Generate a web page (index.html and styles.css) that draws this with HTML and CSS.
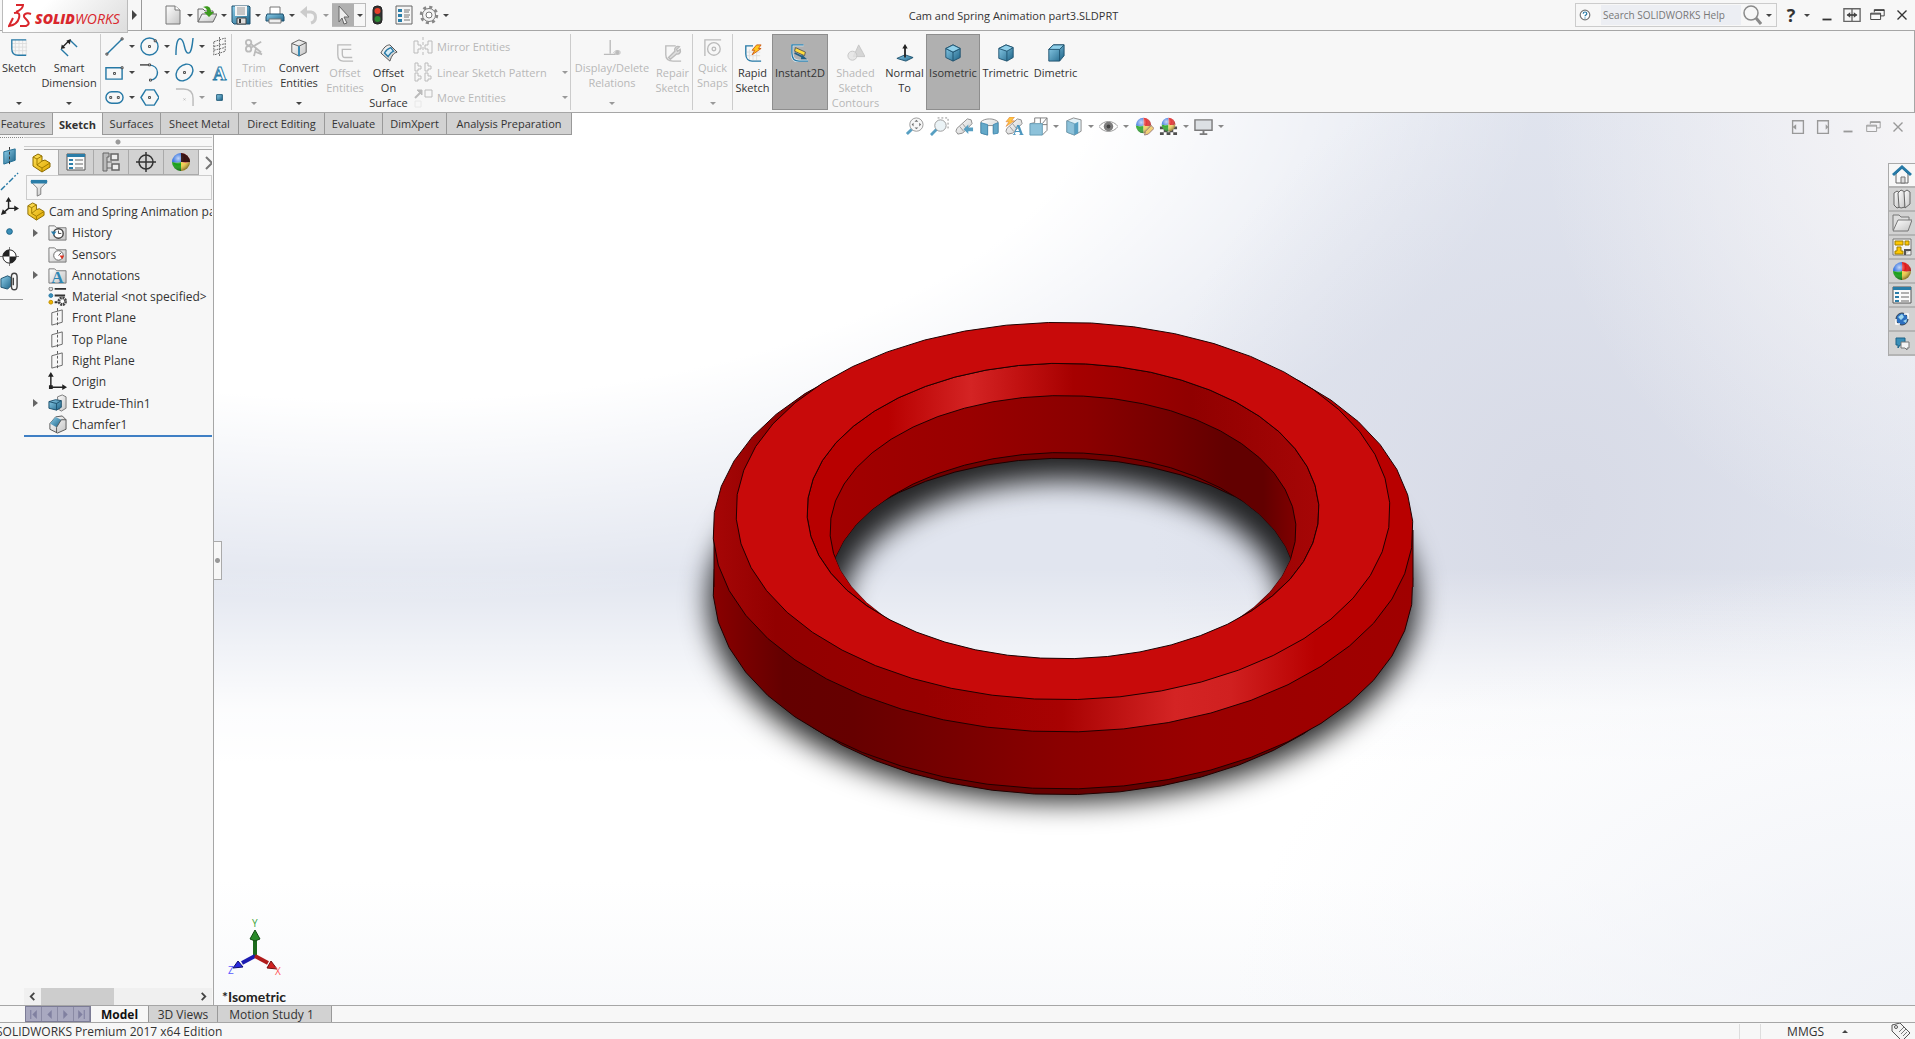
FILE: index.html
```html
<!doctype html>
<html lang="en">
<head>
<meta charset="UTF-8">
<title>Cam and Spring Animation part3.SLDPRT</title>
<link rel="stylesheet" href="styles.css">
</head>
<body>
<!-- shared gradients and symbols -->
<svg class="defs" aria-hidden="true">
	<defs>
		<linearGradient id="gBlue" x1="0" y1="0" x2="1" y2="1"><stop offset="0" stop-color="#8fd0ec"/><stop offset="1" stop-color="#1d6387"/></linearGradient>
		<linearGradient id="gGray" x1="0" y1="0" x2="1" y2="1"><stop offset="0" stop-color="#fff"/><stop offset="1" stop-color="#c4c4c4"/></linearGradient>
		<linearGradient id="gYellow" x1="0" y1="0" x2="1" y2="1"><stop offset="0" stop-color="#ffe25a"/><stop offset="1" stop-color="#e0a800"/></linearGradient>
		<radialGradient id="gShine" cx=".35" cy=".3" r=".7"><stop offset="0" stop-color="#fff" stop-opacity=".7"/><stop offset=".5" stop-color="#fff" stop-opacity="0"/><stop offset="1" stop-color="#000" stop-opacity=".4"/></radialGradient>
	</defs>
	<symbol id="ball" viewBox="0 0 20 20">
		<path d="M10 10V1a9 9 0 0 0-9 9c3 1 6 1 9 0z" fill="#2f6fe0"/><path d="M10 10V1a9 9 0 0 1 9 9c-3 1-6 1-9 0z" fill="#e01818"/>
		<path d="M10 10c-3 1-6 1-9 0a9 9 0 0 0 9 9z" fill="#17a017"/><path d="M10 10c3 1 6 1 9 0a9 9 0 0 1-9 9z" fill="#f4d04a"/>
		<circle cx="10" cy="10" r="9" fill="url(#gShine)"/>
	</symbol>
	<symbol id="part" viewBox="0 0 20 20">
		<path d="M2 4l5-3 4 2v5l3-1 5 3v4l-8 5-9-6z" fill="url(#gYellow)" stroke="#8a6a00"/><path d="M2 4l4 2 5-3M6 6v6l5 3 8-5M11 15v4M6 12l5-4" fill="none" stroke="#a07c00"/>
	</symbol>
	<symbol id="plane" viewBox="0 0 20 20">
		<path d="M4 5l11-3v13L4 18z" fill="none" stroke="#666"/><path d="M10 0v20" stroke="#555" stroke-dasharray="3 2"/>
	</symbol>
	<symbol id="folder" viewBox="0 0 20 20"><path d="M1 3h6l2 2h10v13H1z" fill="url(#gGray)" stroke="#777"/></symbol>
	<symbol id="props" viewBox="0 0 20 20">
		<path d="M1 2h18v16H1z" fill="#fafafa" stroke="#555"/><path d="M1 2h18v3H1z" fill="#2a7da8"/>
		<path d="M3 7h4v2H3zM3 11h4v2H3zM3 15h4v2H3z" fill="#2a7da8"/><path d="M9 8h8M9 12h8M9 16h8" stroke="#666"/>
	</symbol>
	<symbol id="restore" viewBox="0 0 20 20"><path d="M7 7V4h11v7h-4M3 8h11v7H3zM3 9h11M7 5h11" fill="none" stroke="currentColor"/></symbol>
	<symbol id="close" viewBox="0 0 20 20"><path d="M5 5l10 10M15 5L5 15" stroke="currentColor" stroke-width="1.5"/></symbol>
	<symbol id="minimize" viewBox="0 0 20 20"><path d="M5 15h10" stroke="currentColor" stroke-width="2"/></symbol>
	<symbol id="tube" viewBox="0 0 20 20"><path d="M2 12L13 2l4 1 1 4L8 17l-5 1-2-3z" fill="url(#gGray)" stroke="#777"/><path d="M8 7l4 5M5 10l4 5" stroke="#888"/></symbol>
</svg>

<header class="titlebar">
	<a class="logo" href="#" aria-label="SOLIDWORKS">
		<svg viewBox="0 0 24 24" fill="none" stroke="#d9262c" stroke-width="2"><path d="M8 1l7 0c0 3-2 5-7 7M6 9c5-1 6 1 5 5-1 4-4 7-10 8l4-8M23 10c-5-2-9 1-6 4 3 3 6 6 1 8h-6"/></svg>
		<span><b>SOLID</b>WORKS</span>
	</a>
	<button class="expand" aria-label="Show menu"><svg viewBox="0 0 6 10"><path d="M0 0l5 5-5 5z" fill="#444"/></svg></button>
	<nav class="quick">
		<button class="tool" aria-label="New"><svg viewBox="0 0 20 20"><path d="M3 1h9l5 4v14H3z" fill="url(#gGray)" stroke="#777"/><path d="M12 1v4h5" fill="#fff" stroke="#777"/></svg><i class="caret"></i></button>
		<button class="tool" aria-label="Open"><svg viewBox="0 0 20 20"><path d="M1 17V4h5l2 2h8v3" fill="#eee" stroke="#666"/><path d="M1 17L5 9h15l-4 8z" fill="url(#gGray)" stroke="#666"/><path d="M6 2c5-2 8 0 8 5h3l-5 5-5-5h3c0-3-1-4-4-5z" fill="#3c9a1c"/></svg><i class="caret"></i></button>
		<button class="tool" aria-label="Save"><svg viewBox="0 0 20 20"><path d="M1 1h17l1 1v17H3l-2-2z" fill="url(#gBlue)" stroke="#1c4f6c"/><path d="M4 1h12v10H4z" fill="#f4f4f4"/><path d="M6 3h8M6 5h8M6 7h8M6 9h8" stroke="#999"/><path d="M6 13h9v6H6z" fill="#ddd" stroke="#444"/><path d="M8 14h2v4H8z" fill="#333"/></svg><i class="caret"></i></button>
		<button class="tool" aria-label="Print"><svg viewBox="0 0 20 20"><path d="M5 2h10v8H5z" fill="#fff" stroke="#777"/><path d="M2 9h16l1 3v4H1v-4z" fill="url(#gBlue)" stroke="#1c4f6c"/><path d="M4 14h12v4H4z" fill="#eee" stroke="#777"/></svg><i class="caret"></i></button>
		<button class="tool off" aria-label="Undo"><svg viewBox="0 0 20 20"><path d="M4 7h8c6 1 6 9 0 11" fill="none" stroke="#ccc" stroke-width="3"/><path d="M8 1v12L1 7z" fill="#ccc"/></svg><i class="caret"></i></button>
		<button class="tool picked" aria-label="Select"><span><svg viewBox="0 0 20 20"><path d="M6 1l10 11-5 0 3 6-3 1-2-6-3 4z" fill="#eee" stroke="#666"/></svg></span><i class="caret"></i></button>
		<button class="tool short" aria-label="Rebuild"><svg viewBox="0 0 20 20"><rect x="4" y="1" width="9" height="18" rx="4" fill="#333" stroke="#222"/><circle cx="8.500" cy="6" r="3" fill="#e8402a"/><circle cx="8.500" cy="14" r="3" fill="#2c8a33"/></svg></button>
		<button class="tool short" aria-label="File properties"><svg viewBox="0 0 20 20"><path d="M1 1h16v18H1z" fill="#f5f5f5" stroke="#666"/><path d="M3 4h4v3H3zM3 9h4v3H3zM3 14h4v3H3z" fill="#2a7da8"/><path d="M9 5h6M9 7h5M9 10h6M9 12h5M9 15h6" stroke="#777"/></svg></button>
		<button class="tool" aria-label="Options"><svg viewBox="0 0 20 20"><circle cx="10" cy="10" r="8" fill="none" stroke="#888" stroke-width="2.500" stroke-dasharray="3.140 3.140"/><circle cx="10" cy="10" r="6.500" fill="#f4f4f4" stroke="#777"/><circle cx="10" cy="10" r="3" fill="#fff" stroke="#777"/></svg><i class="caret"></i></button>
	</nav>
	<h1 class="doc-title">Cam and Spring Animation part3.SLDPRT</h1>
	<form class="search">
		<svg viewBox="0 0 20 20"><circle cx="10" cy="10" r="8" fill="#fff" stroke="#777" stroke-width="2"/><path d="M7 8c0-4 6-4 6 0 0 2-3 2-3 4M10 14v2" fill="none" stroke="#2679a6" stroke-width="2"/></svg>
		<input type="text" aria-label="Search SOLIDWORKS Help" placeholder="Search SOLIDWORKS Help">
		<button class="tool" type="button" aria-label="Search"><svg viewBox="0 0 20 20" fill="none" stroke="#8a8a8a"><circle cx="9" cy="8" r="7" stroke-width="1.500"/><path d="M14 13l5 6" stroke-width="3"/></svg><i class="caret"></i></button>
	</form>
	<nav class="window-buttons">
		<button class="help" aria-label="Help">?<i class="caret"></i></button>
		<button aria-label="Minimize"><svg viewBox="0 0 20 20"><use href="#minimize"/></svg></button>
		<button aria-label="Span displays"><svg viewBox="0 0 20 20"><path d="M1 3h18v14H1zM10 3v14" fill="none" stroke="#666" stroke-width="1.500"/><path d="M5 10h10" stroke="#444" stroke-width="2"/><path d="M8 7v6l-4-3zM12 7v6l4-3z" fill="#444"/></svg></button>
		<button aria-label="Restore"><svg viewBox="0 0 20 20"><use href="#restore"/></svg></button>
		<button aria-label="Close"><svg viewBox="0 0 20 20"><use href="#close"/></svg></button>
	</nav>
</header>

<section class="ribbon">
	<button class="cmd drop"><svg viewBox="0 0 20 20" fill="none"><path d="M6 1v17M10 1v17M14 1v17M18 1v17M2 5h17M2 9h17M2 13h17" stroke="#ddd"/><path d="M18 1H2v10c0 5 3 7 7 7h9" stroke="#2679a6" stroke-width="1.500"/></svg><span>Sketch</span><i class="caret"></i></button>
	<button class="cmd drop"><svg viewBox="0 0 20 20" fill="none"><path d="M1 11l8 8M11 1l8 8" stroke="#2679a6" stroke-width="1.500"/><path d="M3 9l7-7" stroke="#222" stroke-width="1.500"/><path d="M1 11l1-5 4 4zM12 0l-5 2 4 4z" fill="#222"/></svg><span>Smart Dimension</span><i class="caret"></i></button>
	<div class="sketch-tools">
		<button class="mini" aria-label="Line"><svg viewBox="0 0 20 20" fill="none" stroke="#2679a6"><path d="M2 18L18 2" stroke-width="1.500"/><path d="M1 17h2v2H1zM17 1h2v2h-2z" fill="#fff" stroke="#444"/></svg><i class="caret"></i></button>
		<button class="mini" aria-label="Circle"><svg viewBox="0 0 20 20" fill="none" stroke="#2679a6"><circle cx="10" cy="10" r="9" stroke-width="1.500"/><path d="M9 9h2v2H9zM15 3h2v2h-2z" fill="#fff" stroke="#444"/></svg><i class="caret"></i></button>
		<button class="mini" aria-label="Spline"><svg viewBox="0 0 20 20" fill="none" stroke="#2679a6" stroke-width="1.500"><path d="M1 19C1 6 3 1 6 2c5 2 3 15 8 15 3 0 4-6 5-16"/></svg><i class="caret"></i></button>
		<button class="mini" aria-label="Sketch plane"><svg viewBox="0 0 20 20" fill="none" stroke="#666" stroke-dasharray="2 1"><path d="M4 5l12-4v14L4 19zM10 0v20M4 10l12-3M4 14l12-3"/></svg></button>
		<button class="mini" aria-label="Rectangle"><svg viewBox="0 0 20 20" fill="none" stroke="#2679a6"><path d="M1 5h17v12H1z" stroke-width="1.500"/><path d="M9 10h2v2H9zM17 4h2v2h-2z" fill="#fff" stroke="#444"/></svg><i class="caret"></i></button>
		<button class="mini" aria-label="Arc"><svg viewBox="0 0 20 20" fill="none" stroke="#2679a6"><path d="M0 2h10" stroke="#444" stroke-width="1.500"/><path d="M10 2c11 1 11 15 1 16" stroke-width="1.500"/><path d="M9 1h2v2H9zM10 17h2v2h-2z" fill="#fff" stroke="#444"/></svg><i class="caret"></i></button>
		<button class="mini" aria-label="Ellipse"><svg viewBox="0 0 20 20" fill="none" stroke="#2679a6"><ellipse cx="10" cy="10" rx="10" ry="7.500" transform="rotate(-45 10 10)" stroke-width="1.500"/><path d="M9 9h2v2H9z" stroke="#444"/></svg><i class="caret"></i></button>
		<button class="mini" aria-label="Text"><svg viewBox="0 0 20 20"><text x="10" y="18" text-anchor="middle" class="glyph-a">A</text></svg></button>
		<button class="mini" aria-label="Slot"><svg viewBox="0 0 20 20" fill="none" stroke="#2679a6"><rect x="1" y="4" width="18" height="12" rx="6" stroke-width="1.500"/><path d="M5 9h2v2H5zM13 9h2v2h-2z" stroke="#444"/></svg><i class="caret"></i></button>
		<button class="mini" aria-label="Polygon"><svg viewBox="0 0 20 20" fill="none" stroke="#2679a6"><path d="M1 10l5-8h9l5 8-5 8H6z" stroke-width="1.500"/><path d="M9 9h2v2H9z" stroke="#444"/></svg></button>
		<button class="mini off" aria-label="Fillet"><svg viewBox="0 0 20 20" fill="none" stroke="#bbb"><path d="M1 1h8c7 0 10 4 10 10v8" stroke-width="1.500"/><path d="M9 11l2 2M11 11l-2 2"/></svg><i class="caret"></i></button>
		<button class="mini" aria-label="Point"><svg viewBox="0 0 20 20"><path d="M7 7h6v6H7z" fill="url(#gBlue)" stroke="#1d5878"/></svg></button>
	</div>
	<button class="cmd drop off"><svg viewBox="0 0 20 20" fill="none" stroke="#bbb" stroke-width="2"><circle cx="4" cy="4" r="3"/><circle cx="4" cy="11" r="3"/><path d="M6 5l12 10M6 10L18 3M12 11l-2 8M11 14l8 3"/></svg><span>Trim Entities</span><i class="caret"></i></button>
	<button class="cmd drop"><svg viewBox="0 0 20 20"><path d="M2 5l8-4 8 3v11l-8 4-8-4z" fill="url(#gGray)" stroke="#555"/><path d="M2 5l8 3 8-4M10 8v11" fill="none" stroke="#555"/><path d="M10 8v11" stroke="#2f8ab8" stroke-width="2"/></svg><span>Convert Entities</span><i class="caret"></i></button>
	<button class="cmd off"><svg viewBox="0 0 20 20" fill="none" stroke="#bbb" stroke-width="1.500"><path d="M17 1H2v11c0 4 2 7 6 7h11M17 6H7v5c0 2 1 4 3 4h8"/></svg><span>Offset Entities</span></button>
	<button class="cmd"><svg viewBox="0 0 20 20"><path d="M1 10C4 4 7 1 11 1l8 8c-4 1-6 4-8 10z" fill="url(#gGray)" stroke="#444"/><path d="M5 10c2-4 4-5 7-6l3 4c-3 1-4 3-6 6z" fill="#d6ecf7" stroke="#2679a6" stroke-width="1.500"/></svg><span>Offset On Surface</span></button>
	<div class="stack">
		<button class="row off"><svg viewBox="0 0 20 20" fill="none" stroke="#bbb"><path d="M1 4h4v4h3v4H5v4H1zM19 4h-4v4h-3v4h3v4h4z"/><path d="M10 0v20" stroke-dasharray="3 2"/></svg><span>Mirror Entities</span></button>
		<button class="row off"><svg viewBox="0 0 20 20" fill="none" stroke="#bbb"><path d="M2 1h3v3h3v3H5v2H2zM12 1h3v3h3v3h-3v2h-3zM2 11h3v3h3v3H5v2H2zM12 11h3v3h3v3h-3v2h-3z"/></svg><span>Linear Sketch Pattern</span><i class="caret"></i></button>
		<button class="row off"><svg viewBox="0 0 20 20" fill="none" stroke="#bbb"><path d="M12 2h7v7h-7z"/><path d="M2 10l5-5" stroke-width="2"/><path d="M4 2h5v5z" fill="#bbb"/><path d="M2 13h6v6H2z" stroke="#e8e8e8"/></svg><span>Move Entities</span><i class="caret"></i></button>
	</div>
	<button class="cmd drop off"><svg viewBox="0 0 20 20" fill="none" stroke="#bbb"><path d="M8 1v15M1 17h13" stroke-width="1.500"/><path d="M12 15c2-3 6-3 8 0-2 3-6 3-8 0z"/><circle cx="16" cy="15" r="2" fill="#bbb"/></svg><span>Display/Delete Relations</span><i class="caret"></i></button>
	<button class="cmd off"><svg viewBox="0 0 20 20" fill="none" stroke="#bbb" stroke-width="1.500"><path d="M13 2H2v10c0 5 3 7 8 7h9"/><path d="M5 15l7-7c-1-4 2-6 5-5l-3 3 1 2 3-2c1 3-1 6-4 5l-7 6z" fill="#ddd"/></svg><span>Repair Sketch</span></button>
	<button class="cmd drop off rule"><svg viewBox="0 0 20 20" fill="none" stroke="#bbb" stroke-width="1.500"><path d="M1 19V1h18"/><circle cx="11" cy="11" r="7"/><circle cx="11" cy="11" r="2"/></svg><span>Quick Snaps</span><i class="caret"></i></button>
	<button class="cmd rule"><svg viewBox="0 0 20 20" fill="none"><path d="M6 6v12M10 4v14M14 4v14M3 9h15M3 13h15" stroke="#ddd"/><path d="M10 2H2v9c0 5 3 8 7 8h10" stroke="#2679a6" stroke-width="1.500"/><path d="M14 1h5l-3 4h3L9 12l3-5H9z" fill="#ffc81e" stroke="#d05a10"/></svg><span>Rapid Sketch</span></button>
	<button class="cmd active"><svg viewBox="0 0 20 20" fill="none"><path d="M14 1H1v9c0 6 3 9 8 9h10" stroke="#e8f2f7" stroke-width="3"/><path d="M14 1H1v9c0 6 3 9 8 9h10" stroke="#2679a6" stroke-width="1.500"/><path d="M5 4l11 5-1 4-11-5z" fill="#ffdc3c" stroke="#555"/><path d="M4 10l10 5" stroke="#1f5f85" stroke-width="2"/><path d="M12 12l6 5h-7z" fill="#1f5f85"/></svg><span>Instant2D</span></button>
	<button class="cmd off"><svg viewBox="0 0 20 20"><path d="M13 1l7 13H7z" fill="#d5d5d5" stroke="#c4c4c4"/><circle cx="6" cy="13" r="5" fill="#e2e2e2" fill-opacity=".8" stroke="#c4c4c4"/></svg><span>Shaded Sketch Contours</span></button>
	<button class="cmd"><svg viewBox="0 0 20 20"><path d="M1 16l9-4 9 3-8 4z" fill="url(#gBlue)" stroke="#1c4f6c"/><path d="M10 15V4" stroke="#222" stroke-width="2"/><path d="M7 5l3-5 3 5z" fill="#222"/></svg><span>Normal To</span></button>
	<button class="cmd active"><svg viewBox="0 0 20 20" stroke="#1c4f6c"><path d="M10 1l8 4v10l-8 4-8-4V5z" fill="url(#gBlue)"/><path d="M2 5l8 4 8-4M10 9v10" fill="none"/><path d="M10 1l8 4-8 4-8-4z" fill="#90d0ea"/></svg><span>Isometric</span></button>
	<button class="cmd"><svg viewBox="0 0 20 20" stroke="#1c4f6c"><path d="M10 1l8 3v11l-7 4-9-3V5z" fill="url(#gBlue)"/><path d="M10 1l8 3-7 4-9-3z" fill="#90d0ea"/><path d="M11 8v11" fill="none"/></svg><span>Trimetric</span></button>
	<button class="cmd"><svg viewBox="0 0 20 20" stroke="#1c4f6c"><path d="M7 1h12v12l-5 6H2V6z" fill="url(#gBlue)"/><path d="M7 1h12l-5 5H2z" fill="#90d0ea"/><path d="M14 6v13" fill="none"/></svg><span>Dimetric</span></button>
</section>

<main class="workspace">
	<nav class="tabs">
		<button>Features</button><button class="current">Sketch</button><button>Surfaces</button><button>Sheet Metal</button><button>Direct Editing</button><button>Evaluate</button><button>DimXpert</button><button>Analysis Preparation</button>
	</nav>

	<aside class="side">
		<nav class="strip">
			<button aria-label="Plane"><svg viewBox="0 0 20 20"><path d="M4 5l12-3v12L4 18z" fill="url(#gBlue)" stroke="#1c6a90"/><path d="M10 0v20" stroke="#333" stroke-dasharray="3 2"/></svg></button>
			<button aria-label="Axis"><svg viewBox="0 0 20 20"><path d="M1 19L19 1" stroke="#2679a6" stroke-width="1.500" stroke-dasharray="6 2 2 2"/></svg></button>
			<button aria-label="Coordinate system"><svg viewBox="0 0 20 20" stroke="#222" stroke-width="1.500"><path d="M9 12V4M9 12h8M9 12l-6 5"/><path d="M6 5l3-5 3 5zM15 9l5 3-5 3zM3 13l-2 6 6-2z" fill="#222" stroke="none"/></svg></button>
			<button aria-label="Point"><svg viewBox="0 0 20 20"><circle cx="10" cy="10" r="3" fill="#3a8fb8" stroke="#1d6387"/></svg></button>
			<button aria-label="Center of mass"><svg viewBox="0 0 20 20"><path d="M0 10h20M10 0v20" stroke="#777"/><circle cx="10" cy="10" r="7" fill="#fff" stroke="#222"/><path d="M10 10V3a7 7 0 0 0-7 7zM10 10v7a7 7 0 0 0 7-7z" fill="#222"/></svg></button>
			<button aria-label="Mate reference"><svg viewBox="0 0 20 20"><path d="M1 7l7-3 4 2v8l-4 4-7-2z" fill="url(#gBlue)" stroke="#1c4f6c"/><path d="M12 16V5c0-5 6-5 6 0v10c0 5-6 5-6 0M14 6v8" fill="none" stroke="#444" stroke-width="1.500"/></svg></button>
		</nav>
		<section class="manager">
			<div class="grip"></div>
			<nav class="manager-tabs">
				<button class="current" aria-label="FeatureManager"><svg viewBox="0 0 20 20"><use href="#part"/></svg></button>
				<button aria-label="PropertyManager"><svg viewBox="0 0 20 20"><use href="#props"/></svg></button>
				<button aria-label="ConfigurationManager"><svg viewBox="0 0 20 20" fill="#eee" stroke="#666"><path d="M2 1h6v4H6v14H2zM6 10h5M6 16h7" fill="#bbb"/><path d="M10 2h7v6h-7zM11 12h7v6h-7z" stroke-width="1.500"/></svg></button>
				<button aria-label="DimXpertManager"><svg viewBox="0 0 20 20" fill="none" stroke="#333" stroke-width="1.500"><circle cx="10" cy="10" r="7"/><path d="M0 10h20M10 0v20"/></svg></button>
				<button aria-label="DisplayManager"><svg viewBox="0 0 20 20"><use href="#ball"/><path d="M10 10V1a9 9 0 0 1 9 9z" fill="#111" opacity=".8"/></svg></button>
				<button class="more" aria-label="More tabs"><svg viewBox="0 0 20 20"><path d="M7 4l6 6-6 6" fill="none" stroke="#777" stroke-width="2"/></svg></button>
			</nav>
			<label class="filter"><svg viewBox="0 0 20 20"><path d="M1 3h18l-7 7v7l-4 2v-9z" fill="url(#gGray)" stroke="#777"/><path d="M1 1h18v4H1z" fill="#2a7da8"/></svg><input type="text" aria-label="Filter"></label>
			<ul class="tree">
				<li class="root"><svg viewBox="0 0 20 20"><use href="#part"/></svg><span>Cam and Spring Animation part3</span></li>
				<li class="parent"><svg viewBox="0 0 20 20"><use href="#folder"/><circle cx="11" cy="11" r="5" fill="#fff" stroke="#444" stroke-width="1.500"/><path d="M11 8v3h3" fill="none" stroke="#444"/><path d="M3 9l3 4 3-4z" fill="#2679a6"/></svg><span>History</span></li>
				<li><svg viewBox="0 0 20 20"><use href="#folder"/><circle cx="11" cy="11" r="5" fill="#fff" stroke="#666"/><path d="M11 11l3-3" stroke="#444"/><path d="M12 11h5l-2 4z" fill="#e03020"/></svg><span>Sensors</span></li>
				<li class="parent"><svg viewBox="0 0 20 20"><use href="#folder"/><text x="10" y="18" text-anchor="middle" class="glyph-a solid">A</text></svg><span>Annotations</span></li>
				<li><svg viewBox="0 0 20 20"><circle cx="3" cy="2" r="2" fill="#ddd" stroke="#777"/><circle cx="3" cy="9" r="2" fill="#3a8fb8" stroke="#2679a6"/><circle cx="3" cy="16" r="2" fill="#f0b400" stroke="#c09000"/><path d="M7 2h12M7 9h11M7 16h3" stroke="#333" stroke-width="2"/><circle cx="15" cy="15" r="3.500" fill="#fff" stroke="#444" stroke-width="3" stroke-dasharray="2 .7"/></svg><span>Material &lt;not specified&gt;</span></li>
				<li><svg viewBox="0 0 20 20"><use href="#plane"/></svg><span>Front Plane</span></li>
				<li><svg viewBox="0 0 20 20"><use href="#plane"/></svg><span>Top Plane</span></li>
				<li><svg viewBox="0 0 20 20"><use href="#plane"/></svg><span>Right Plane</span></li>
				<li><svg viewBox="0 0 20 20"><path d="M3 2v14h14" fill="none" stroke="#222" stroke-width="1.500"/><path d="M0 5l3-5 3 5zM15 13l5 3-5 3zM1 14h4v4H1z" fill="#222"/></svg><span>Origin</span></li>
				<li class="parent"><svg viewBox="0 0 20 20"><path d="M10 3l5-2 4 2v12l-5 3-3-2z" fill="url(#gGray)" stroke="#777"/><path d="M1 8l7-2 6 1v7l-5 3-8-2z" fill="url(#gBlue)" stroke="#1c4f6c"/><path d="M1 8l8 2 5-3M9 10v7" fill="none" stroke="#1c4f6c"/></svg><span>Extrude-Thin1</span></li>
				<li><svg viewBox="0 0 20 20"><path d="M2 9l6-7 7-1 4 4v10l-9 4-8-4z" fill="url(#gGray)" stroke="#555"/><path d="M2 9l6-7 6 3-5 8z" fill="url(#gBlue)"/><path d="M9 13v6M9 13l5-8 5 0" fill="none" stroke="#555"/></svg><span>Chamfer1</span></li>
			</ul>
			<div class="hscroll">
				<button aria-label="Scroll left"><svg viewBox="0 0 10 10"><path d="M7 1L3 5l4 4" fill="none" stroke="#444" stroke-width="2"/></svg></button>
				<div class="thumb"></div>
				<button aria-label="Scroll right"><svg viewBox="0 0 10 10"><path d="M3 1l4 4-4 4" fill="none" stroke="#444" stroke-width="2"/></svg></button>
			</div>
		</section>
	</aside>

	<section class="viewport">
		<!-- rings: data-cy is the centre height, data-r the horizontal radius -->
		<svg class="model" viewBox="214 113 1701 892" role="img" aria-label="Chamfered ring">
			<defs>
				<linearGradient id="outerCham" gradientUnits="userSpaceOnUse" x1="713" y1="0" x2="1413" y2="0"><stop offset="0" stop-color="#a60606"/><stop offset=".09" stop-color="#920000"/><stop offset=".3" stop-color="#970000"/><stop offset=".5" stop-color="#a80202"/><stop offset=".66" stop-color="#d42424"/><stop offset=".74" stop-color="#d02020"/><stop offset=".86" stop-color="#b80000"/><stop offset="1" stop-color="#b80000"/></linearGradient>
				<linearGradient id="outerWall" gradientUnits="userSpaceOnUse" x1="713" y1="0" x2="1413" y2="0"><stop offset="0" stop-color="#8a0000"/><stop offset=".1" stop-color="#640000"/><stop offset=".2" stop-color="#660000"/><stop offset=".5" stop-color="#8b0000"/><stop offset=".7" stop-color="#9a0000"/><stop offset="1" stop-color="#a00000"/></linearGradient>
				<linearGradient id="innerCham" gradientUnits="userSpaceOnUse" x1="807" y1="0" x2="1319" y2="0"><stop offset="0" stop-color="#b80000"/><stop offset=".16" stop-color="#b80000"/><stop offset=".32" stop-color="#d42424"/><stop offset=".42" stop-color="#c01010"/><stop offset=".52" stop-color="#a60000"/><stop offset=".75" stop-color="#900000"/><stop offset="1" stop-color="#a60606"/></linearGradient>
				<linearGradient id="innerWall" gradientUnits="userSpaceOnUse" x1="830" y1="0" x2="1296" y2="0"><stop offset="0" stop-color="#a20000"/><stop offset=".3" stop-color="#990000"/><stop offset=".55" stop-color="#8a0000"/><stop offset=".72" stop-color="#760000"/><stop offset=".85" stop-color="#620000"/><stop offset=".93" stop-color="#620000"/><stop offset="1" stop-color="#800000"/></linearGradient>
				<filter id="soft" filterUnits="userSpaceOnUse" x="600" y="350" width="930" height="520"><feGaussianBlur stdDeviation="14"/></filter>
				<clipPath id="c1"><polygon data-cy="511" data-r="256"/></clipPath>
				<clipPath id="c2"><polygon data-cy="530" data-r="233"/></clipPath>
				<clipPath id="c3"><polygon data-cy="587" data-r="233"/></clipPath>
				<mask id="body" maskUnits="userSpaceOnUse" x="600" y="300" width="930" height="560">
					<path d="M600 300h930v560H600z" fill="#fff"/>
					<g clip-path="url(#c1)"><g clip-path="url(#c2)"><g clip-path="url(#c3)"><polygon data-cy="606" data-r="256" fill="#000"/></g></g></g>
				</mask>
			</defs>
			<path d="M709 601a354 201 0 0 1 708 0 354 201 0 0 1-708 0zM843 606a220 126 0 0 0 440 0 220 126 0 0 0-440 0z" fill="#000" fill-opacity=".85" fill-rule="evenodd" filter="url(#soft)"/>
			<g mask="url(#body)" stroke="#200000" stroke-width="1">
				<polygon data-cy="606" data-r="327" fill="#660000"/>
				<polygon data-cy="587" data-r="350" fill="url(#outerWall)"/>
				<path d="M714 530v57h699v-57z" fill="url(#outerWall)" stroke="none"/>
				<path d="M714 530v57M1413 530v57"/>
				<polygon data-cy="530" data-r="350" fill="url(#outerCham)"/>
				<polygon data-cy="511" data-r="327" fill="#c80a0a"/>
				<g clip-path="url(#c1)">
					<polygon data-cy="511" data-r="256" fill="url(#innerCham)"/>
					<polygon data-cy="530" data-r="233" fill="url(#innerWall)"/>
					<g clip-path="url(#c2)"><polygon data-cy="587" data-r="233" fill="#700000"/></g>
				</g>
			</g>
			<g fill="none" stroke="#200000">
				<polygon data-cy="511" data-r="256"/>
				<g clip-path="url(#c1)"><g clip-path="url(#c2)"><g clip-path="url(#c3)"><polygon data-cy="606" data-r="256"/></g></g></g>
			</g>
		</svg>

		<div class="viewbar">
			<nav class="headsup">
				<button class="tool" aria-label="Zoom to fit"><svg viewBox="0 0 20 20"><path d="M2 18l6-6" stroke="#3a8fb8" stroke-width="3"/><circle cx="12" cy="8" r="7" fill="#f6f6f6" stroke="#888"/><path d="M12 3l2 2h-4zM12 13l2-2h-4zM7 8l2-2v4zM17 8l-2-2v4z" fill="#555"/></svg></button>
				<button class="tool" aria-label="Zoom to area"><svg viewBox="0 0 20 20"><path d="M8 1h11v11" fill="none" stroke="#777" stroke-dasharray="2 2"/><path d="M1 19l6-6" stroke="#3a8fb8" stroke-width="3"/><circle cx="11" cy="9" r="6" fill="#e8f1f5" stroke="#888"/></svg></button>
				<button class="tool" aria-label="Previous view"><svg viewBox="0 0 20 20"><use href="#tube"/><path d="M9 13l5-5v3h5v4h-5v3z" fill="#3a8fb8"/></svg></button>
				<button class="tool" aria-label="Section view"><svg viewBox="0 0 20 20"><path d="M1 5c4-4 14-4 18 0v11l-5 1V9H8v10l-7-2z" fill="url(#gGray)" stroke="#777"/><path d="M1 6l7 2v11l-7-2zM14 8l5-2v11l-5 1z" fill="#4a9bc0" stroke="#2679a6"/></svg></button>
				<button class="tool" aria-label="Dynamic annotation views"><svg viewBox="0 0 20 20"><use href="#tube"/><path d="M5 0h5L7 4h3L1 10l3-5H1z" fill="#ffb81e" stroke="#d05a10" stroke-width=".5"/><text x="14" y="19" text-anchor="middle" class="glyph-a solid small">A</text></svg></button>
				<button class="tool wide" aria-label="View orientation"><svg viewBox="0 0 20 20"><path d="M6 6V1h13v13l-5 5M6 6l-5 1M19 1l-5 6M12 1v8M19 8h-6" fill="none" stroke="#666"/><path d="M1 7h13v12H1z" fill="#7ab8d4" stroke="#4a8aa8"/></svg><i class="caret"></i></button>
				<button class="tool wide" aria-label="Display style"><svg viewBox="0 0 20 20"><path d="M3 4l7-3 8 2v12l-7 4-8-3z" fill="#dceef5" stroke="#777"/><path d="M3 4l8 3v12l-8-3z" fill="#7ab8d4" stroke="#5590ac"/><path d="M11 7l4-2v12l-4 2z" fill="#3a8fb8"/></svg><i class="caret"></i></button>
				<button class="tool wide" aria-label="Hide/show items"><svg viewBox="0 0 20 20"><path d="M0 10C5 3 15 3 20 10 15 17 5 17 0 10z" fill="#fff" stroke="#888"/><circle cx="10" cy="10" r="5" fill="#666"/><circle cx="10" cy="10" r="2" fill="#222"/></svg><i class="caret"></i></button>
				<button class="tool" aria-label="Edit appearance"><svg viewBox="0 0 20 20"><use href="#ball" width="18" height="18"/><path d="M10 19l1-4 6-6 3 3-6 6z" fill="#f0c860" stroke="#866"/></svg></button>
				<button class="tool wide" aria-label="Apply scene"><svg viewBox="0 0 20 20"><path d="M1 10h18v9H1z" fill="#fff"/><path d="M1 10h4v3H1zM15 10h4v3h-4zM5 13h4v3H5zM11 13h4v3h-4zM1 16h4v3H1zM8 16h4v3H8zM15 16h4v3h-4z" fill="#333"/><use href="#ball" x="2" width="16" height="16"/></svg><i class="caret"></i></button>
				<button class="tool wide" aria-label="View settings"><svg viewBox="0 0 20 20"><path d="M1 3h18v11H1z" fill="#d8dce0" stroke="#666" stroke-width="1.500"/><path d="M10 14v3M6 18h8" stroke="#666" stroke-width="2"/></svg><i class="caret"></i></button>
			</nav>
			<nav class="doc-buttons">
				<button aria-label="Previous pane"><svg viewBox="0 0 20 20"><path d="M4 3h12v14H4z" fill="none" stroke="currentColor" stroke-width="1.500"/><path d="M4 10l4-3v6z" fill="currentColor"/></svg></button>
				<button aria-label="Next pane"><svg viewBox="0 0 20 20"><path d="M4 3h12v14H4z" fill="none" stroke="currentColor" stroke-width="1.500"/><path d="M16 10l-3-3v6z" fill="currentColor"/></svg></button>
				<button aria-label="Minimize document"><svg viewBox="0 0 20 20"><use href="#minimize"/></svg></button>
				<button aria-label="Restore document"><svg viewBox="0 0 20 20"><use href="#restore"/></svg></button>
				<button aria-label="Close document"><svg viewBox="0 0 20 20"><use href="#close"/></svg></button>
			</nav>
		</div>

		<nav class="taskpane">
			<button class="current" aria-label="Resources"><svg viewBox="0 0 20 20"><path d="M4 9v9h12V9l-6-6z" fill="#f8f8f8" stroke="#666"/><path d="M1 10l9-8 9 8" fill="none" stroke="#2679a6" stroke-width="3"/><path d="M9 12h4v6H9z" fill="#ddd" stroke="#777"/></svg></button>
			<button aria-label="Design library"><svg viewBox="0 0 20 20" fill="url(#gGray)" stroke="#666"><path d="M2 4l3-2 3 2v14l-3 1-3-3z"/><path d="M6 4l3-3 4 2v15l-4 1-2-1z"/><path d="M12 3l3-2 3 2v12l-5 4z"/></svg></button>
			<button aria-label="File explorer"><svg viewBox="0 0 20 20"><path d="M1 17V2h6l2 2h8v4" fill="#ddd" stroke="#777"/><path d="M1 18L6 7h14l-4 11z" fill="url(#gGray)" stroke="#777"/></svg></button>
			<button aria-label="View palette"><svg viewBox="0 0 20 20"><path d="M1 2h18v16H1z" fill="#f4f4f4" stroke="#777"/><path d="M3 4h8v4H3zM13 4h4v4h-4zM5 10h4v4h2v3H3v-3h2z" fill="#ffc800" stroke="#a08000"/><path d="M13 18v-5h6" fill="#ccc" stroke="#555" stroke-width="2"/></svg></button>
			<button aria-label="Appearances"><svg viewBox="0 0 20 20"><use href="#ball"/></svg></button>
			<button aria-label="Custom properties"><svg viewBox="0 0 20 20"><use href="#props"/></svg></button>
			<button aria-label="Forum"><svg viewBox="0 0 20 20"><circle cx="10" cy="10" r="6" fill="#2c6fbf" stroke="#345"/><path d="M6 8l4-3 2 3-3 3zM11 12l4-2-1 4z" fill="#9fd8f0"/><path d="M4 10v5h4M16 10V5h-4" fill="none" stroke="#fff" stroke-width="1.500"/></svg></button>
			<button aria-label="Comments"><svg viewBox="0 0 20 20"><path d="M4 5h9v7H8l-2 3v-3H4z" fill="#3a8fb8" stroke="#1d6387"/><path d="M9 9h8v6h-2v2l-2-2H9z" fill="#f4f4f4" stroke="#777"/></svg></button>
		</nav>

		<button class="flyout" aria-label="Collapse panel"></button>

		<div class="orientation">
			<svg viewBox="0 0 60 60">
				<path d="M33 38V20" stroke="#1c6a1c" stroke-width="4"/><path d="M28 21l5-9 5 9-5 2z" fill="#2a8a2a" stroke="#124a12"/>
				<path d="M33 38l-13 7" stroke="#1c1cb0" stroke-width="4"/><path d="M11 50l5-7 5 6z" fill="#2a2ae0" stroke="#101070"/>
				<path d="M33 38l13 7" stroke="#b01c1c" stroke-width="4"/><path d="M55 51l-10-1 4-7z" fill="#d02020" stroke="#701010"/>
				<text x="30" y="9" fill="#39a339">Y</text><text x="6" y="56" fill="#5a5aff">Z</text><text x="53" y="57" fill="#ff5a5a">X</text>
			</svg>
			<strong>*Isometric</strong>
		</div>
	</section>
</main>

<footer>
	<nav class="sheets">
		<div class="pager">
			<button aria-label="First"><svg viewBox="0 0 10 10"><path d="M2 1h1v8H2zM8 1v8L4 5z"/></svg></button><button aria-label="Previous"><svg viewBox="0 0 10 10"><path d="M7 1v8L3 5z"/></svg></button><button aria-label="Next"><svg viewBox="0 0 10 10"><path d="M3 1v8l4-4z"/></svg></button><button aria-label="Last"><svg viewBox="0 0 10 10"><path d="M2 1v8l4-4zM7 1h1v8H7z"/></svg></button>
		</div>
		<button class="sheet current">Model</button><button class="sheet">3D Views</button><button class="sheet long">Motion Study 1</button>
	</nav>
	<div class="status">
		<span class="edition">SOLIDWORKS Premium 2017 x64 Edition</span>
		<span class="ticks"></span>
		<button class="units">MMGS<i class="caret up"></i></button>
		<button class="tag" aria-label="Tags"><svg viewBox="0 0 20 20"><path d="M1 3l8-2 10 10-8 8L1 9z" fill="#f4f4f4" stroke="#555"/><circle cx="5" cy="5" r="1.500" fill="#fff" stroke="#555"/><path d="M8 10l5-5M10 12l5-5M12 14l4-4" stroke="#777"/></svg></button>
	</div>
</footer>
<script src="script.js"></script>
</body>
</html>
```
FILE: styles.css
```css
*{box-sizing:border-box;}
html,body{height:100%;margin:0;}
body{display:flex;flex-direction:column;background:#f7f7f7;color:#333;font:12px/15px "Open Sans","Noto Sans",sans-serif;overflow:hidden;}
button{align-items:center;background:none;border:0;color:inherit;display:flex;font:inherit;justify-content:center;margin:0;padding:0;}
input{font:inherit;}
svg{display:block;flex:none;height:20px;width:20px;}
.defs{height:0;position:absolute;width:0;}
.caret{border:3px solid transparent;border-bottom:0;border-top-color:#444;height:0;width:0;}
.off{color:#b8b8b8;}
.off .caret{border-top-color:#999;}

.titlebar{align-items:center;border-bottom:1px solid #a6a6a6;display:flex;flex:none;height:31px;}
.logo{align-items:center;align-self:flex-start;background:linear-gradient(135deg,#fff 30%,#ddd);border:1px solid #bbb;border-top:0;color:#d9262c;display:flex;flex:none;font-size:14px;font-style:italic;gap:3px;height:33px;margin-left:2px;padding-left:5px;padding-top:4px;text-decoration:none;width:126px;z-index:1;}
.logo svg{height:24px;margin-bottom:4px;width:24px;}
.logo b{font-weight:800;}
.expand{border-right:1px solid #999;height:30px;width:14px;}
.expand svg{height:10px;width:6px;}
.quick{display:flex;margin-left:20px;}
.tool{height:24px;width:34px;}
.tool svg{margin:0 1px;}
.tool .caret{margin:0 3px;}
.tool.short{width:26px;}
.picked{border:1px solid #bbb;}
.picked span{background:#b0b0b0;padding:1px 0;}
.doc-title{flex:1;font-size:11px;font-weight:400;margin:0;text-align:center;}
.search{align-items:center;border:1px solid #ccc;display:flex;height:24px;width:202px;}
.search > svg{height:12px;margin:0 10px 0 3px;width:12px;}
.search input{background:#eceef3;border:0;color:#666;font-size:10px;height:20px;min-width:0;padding:0 2px;width:140px;}
.search input::placeholder{color:#777;opacity:1;}
.window-buttons{display:flex;}
.window-buttons button,.doc-buttons button{height:24px;width:25px;}
.window-buttons .help{font-size:18px;font-weight:700;gap:9px;margin-left:6px;width:31px;}
.window-buttons button:last-child{margin-right:1px;}
.window-buttons svg{height:18px;width:18px;}

.ribbon{border-bottom:1px solid #a6a6a6;border-right:1px solid #a6a6a6;display:grid;flex:none;font-size:11px;grid-template-columns:38px 62px 132px 44px 46px 46px 41px 162px 82px 39px 40px 40px 56px 55px 43px 54px 51px 49px;height:82px;padding:3px 0 2px;}
.cmd{flex-direction:column;justify-content:flex-start;min-width:0;padding-top:9px;}
.cmd.drop{padding-top:4px;}
.cmd svg{height:18px;margin:1px 0 3px;width:18px;}
.cmd .caret{margin:auto 0 5px;}
.rule{border-left:1px solid #ccc;}
.active{background:#b0b0b0;border:1px solid #8e8e8e;}
.cmd.active{padding-top:8px;}
.sketch-tools{align-content:space-between;border-left:1px solid #ccc;border-right:1px solid #ccc;display:grid;grid-template-columns:35px 35px 35px 20px;padding-left:3px;}
.mini{height:25px;justify-content:flex-start;}
.mini svg{height:19px;margin:0 5px 0 1px;width:19px;}
.glyph-a{fill:#fff;font:bold 20px/20px "Liberation Serif",serif;stroke:#2679a6;}
.glyph-a.solid{fill:#2f86b4;font-size:18px;stroke:none;}
.glyph-a.small{font-size:16px;}
.stack{border-right:1px solid #ccc;display:flex;flex-direction:column;justify-content:space-between;padding:0 2px 0 4px;}
.row{height:25px;justify-content:flex-start;}
.row span{margin:0 auto 0 4px;}

.workspace{display:grid;flex:1;grid-template-columns:214px 1fr;grid-template-rows:22px 1fr;min-height:0;}
.tabs{background:#d2d2d2;border-bottom:1px solid #999;display:grid;font-size:11px;grid-column:1/3;grid-row:1;grid-template-columns:53px 50px 58px 78px 86px 58px 64px 125px;justify-self:start;z-index:2;}
.tabs button{border-right:1px solid #999;white-space:nowrap;}
.tabs button:first-child{padding-right:6px;}
.tabs .current{background:#f7f7f7;font-weight:700;margin-bottom:-1px;}
.side{border-right:1px solid #a6a6a6;display:flex;min-height:0;}
.strip{align-self:flex-start;border-bottom:1px solid #999;border-top:1px dotted #888;margin-top:2px;padding:6px 0 5px;width:23px;}
.strip button{height:25px;width:19px;}
.strip svg{height:19px;width:19px;}
.manager{display:flex;flex:1;flex-direction:column;min-width:0;padding:2px 1px 0 1px;}
.grip{background:radial-gradient(circle,#999 2px,transparent 3px);border-bottom:1px solid #ccc;border-top:1px solid #ccc;flex:none;height:10px;margin-bottom:2px;}
.manager-tabs{border-top:1px solid #aaa;display:flex;flex:none;height:26px;overflow:hidden;}
.manager-tabs button{background:#d2d2d2;border-bottom:1px solid #aaa;border-right:1px solid #aaa;flex:none;width:35px;}
.manager-tabs .current,.manager-tabs .more{background:none;border-bottom:0;}
.manager-tabs .more{border-right:0;flex:1;min-width:0;padding-left:6px;}
.filter{align-items:center;border:1px solid #ccc;display:flex;flex:none;height:25px;margin:0 0 0 2px;padding-left:3px;}
.filter svg{height:18px;width:18px;}
.filter input{background:none;border:0;flex:1;min-width:0;}
.tree{border-bottom:2px solid #3f7fc4;display:grid;flex:none;grid-auto-rows:1fr;height:236px;list-style:none;margin:1px 0 0;overflow:hidden;padding:0;}
.tree li{align-items:center;display:flex;gap:5px;padding-left:24px;white-space:nowrap;}
.tree li svg{height:19px;width:19px;}
.tree .root{gap:4px;padding-left:2px;}
.tree .parent{padding-left:9px;}
.tree .parent:before{border:4px solid transparent;border-left:5px solid #666;border-right:0;content:"";margin-right:5px;}
.hscroll{background:#f0f0f0;display:flex;height:17px;margin-top:auto;}
.hscroll button{width:17px;}
.hscroll svg{height:9px;width:9px;}
.thumb{background:#cdcdcd;margin-right:auto;width:73px;}

.viewport{background:
	radial-gradient(ellipse 40% 50% at 100% 100%,#f0f2f7,rgba(240,242,247,0)),
	linear-gradient(to bottom,rgba(255,255,255,0) 51%,rgba(255,255,255,.45) 59%,rgba(255,255,255,.9) 67%,#fff 73%,#fff 86%,#f8f9fb),
	radial-gradient(ellipse 24% 50% at 102% 0,#f5f4f6 10%,rgba(243,243,246,0)),
	radial-gradient(ellipse 24% 50% at 79% 44%,#d7dae6,rgba(215,218,230,0)),
	radial-gradient(ellipse 68% 60% at 10% -5%,#fff 62%,rgba(255,255,255,0)),
	#e1e5ef;
	display:flex;flex-direction:column;grid-column:2;grid-row:1/3;min-width:0;position:relative;}
.model{height:100%;left:0;position:absolute;top:0;width:100%;}
.model polygon{stroke-linejoin:round;}
.viewbar{align-items:center;display:grid;grid-template-columns:1fr auto 1fr;height:27px;position:relative;}
.headsup{display:flex;grid-column:2;}
.headsup .tool{width:25px;}
.headsup .wide{width:35px;}
.headsup .caret{border-top-color:#888;}
.headsup svg{height:19px;margin:0 2px;opacity:.85;width:19px;}
.doc-buttons{color:#999;display:flex;justify-self:end;padding-right:5px;}
.doc-buttons svg{height:18px;width:18px;}
.taskpane{align-self:flex-end;border-left:1px solid #aaa;border-top:1px solid #aaa;display:flex;flex-direction:column;margin-top:23px;position:relative;}
.taskpane button{background:#d2d2d2;border-bottom:2px solid #b4b4b4;height:24px;width:26px;}
.taskpane .current{background:#f7f7f7;}
.flyout{background:radial-gradient(circle,#999 2px,#f7f7f7 3px);border:1px solid #aaa;height:39px;left:-1px;position:absolute;top:48%;width:9px;}
.orientation{bottom:0;left:8px;position:absolute;}
.orientation svg{height:60px;margin-bottom:10px;width:60px;}
.orientation text{font:10px "Open Sans",sans-serif;}
.orientation strong{color:#222;display:block;font:700 14px/17px Lato,sans-serif;}

footer{flex:none;}
.sheets{border-top:1px solid #a6a6a6;display:flex;height:17px;padding-left:25px;}
.pager{background:#a9a9c0;border:1px solid #7c7c96;display:flex;}
.pager button{border-right:1px solid #8a8aa4;width:16px;}
.pager svg{fill:#8080a0;height:11px;width:11px;}
.sheet{background:#d2d2d2;border-right:1px solid #999;width:69px;}
.sheet.current{background:#f7f7f7;color:#111;font-weight:700;width:58px;}
.sheet.long{padding-right:6px;width:114px;}
.status{align-items:center;border-top:1px solid #a6a6a6;display:flex;height:17px;overflow:hidden;padding-top:1px;}
.edition{margin-left:-4px;margin-right:auto;white-space:nowrap;}
.ticks{border:solid #ddd;border-width:0 1px;height:16px;margin-right:26px;width:22px;}
.units{gap:18px;}
.caret.up{border-bottom:3px solid #444;border-top:0;}
.tag{margin:0 4px 0 43px;}
```
FILE: script.js
```js
// turn each ring outline into a 48 sided isometric polygon
var rings = document.querySelectorAll('.model polygon'), i, j, cy, r, a, points;
for (i = 0; i < rings.length; i++) {
	cy = +rings[i].getAttribute('data-cy');
	r = +rings[i].getAttribute('data-r');
	points = [];
	for (j = 0; j < 48; j++) {
		a = (j * 7.5 + 5) * Math.PI / 180;
		points.push((1063 + r * Math.cos(a)).toFixed(1) + ',' + (cy + r * 0.577 * Math.sin(a)).toFixed(1));
	}
	rings[i].setAttribute('points', points.join(' '));
}
```
